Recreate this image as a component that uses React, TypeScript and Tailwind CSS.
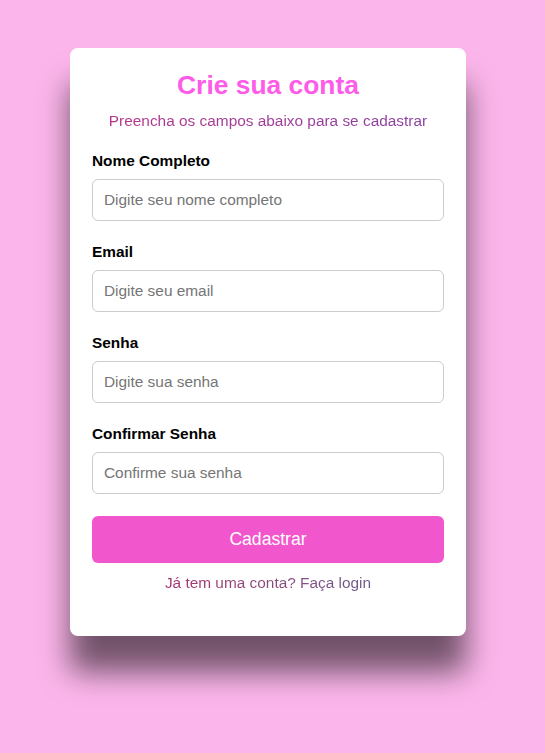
import React, { useState } from "react";

const fields: { label: string; type: string; placeholder: string; name: string }[] = [
  { label: "Nome Completo", type: "text", placeholder: "Digite seu nome completo", name: "name" },
  { label: "Email", type: "email", placeholder: "Digite seu email", name: "email" },
  { label: "Senha", type: "password", placeholder: "Digite sua senha", name: "password" },
  { label: "Confirmar Senha", type: "password", placeholder: "Confirme sua senha", name: "confirm" },
];

const App = () => {
  const [values, setValues] = useState<Record<string, string>>({});

  const handleChange = (event: React.ChangeEvent<HTMLInputElement>) => {
    setValues({ ...values, [event.target.name]: event.target.value });
  };

  return (
    <div className="min-h-screen bg-[#fbb5ea] pt-[48px] pl-[70px] font-['Liberation_Sans',Arial,sans-serif] leading-[1.15]">
      <div className="w-[396px] rounded-[8px] bg-white px-[22px] pt-[22px] pb-[45px] shadow-[0_36px_30px_rgba(0,0,0,0.55)]">
        <h2 className="mb-[12px] text-center text-[26.4px] leading-[1.15] font-bold text-[#fd5ce8]">
          Crie sua conta
        </h2>
        <p className="mb-[22px] text-center text-[15.4px] leading-[1.15]">
          <span className="bg-gradient-to-r from-[#b5338a] to-[#8a3ea2] bg-clip-text text-transparent">
            Preencha os campos abaixo para se cadastrar
          </span>
        </p>

        <form onSubmit={(e) => e.preventDefault()}>
          {fields.map((item) => (
            <div className="mb-[22px]" key={item.name}>
              <label className="mb-[9.2px] block text-[15.4px] leading-[1.15] font-bold text-black">
                {item.label}
              </label>
              <input
                type={item.type}
                name={item.name}
                value={values[item.name] || ""}
                onChange={handleChange}
                placeholder={item.placeholder}
                className="h-[42px] w-full rounded-[6px] border border-[#cccccc] px-[11px] text-[15.4px] outline-none placeholder:text-[#757575]"
              />
            </div>
          ))}

          <button className="h-[47px] w-full rounded-[6px] bg-[#f256cc] text-[17.6px] text-white">
            Cadastrar
          </button>
        </form>

        <p className="mt-[11px] text-center text-[15.4px] leading-[1.15]">
          <span className="bg-gradient-to-r from-[#a8306f] to-[#6b5a8a] bg-clip-text text-transparent">
            Já tem uma conta? Faça login
          </span>
        </p>
      </div>
    </div>
  );
};

export default App;
